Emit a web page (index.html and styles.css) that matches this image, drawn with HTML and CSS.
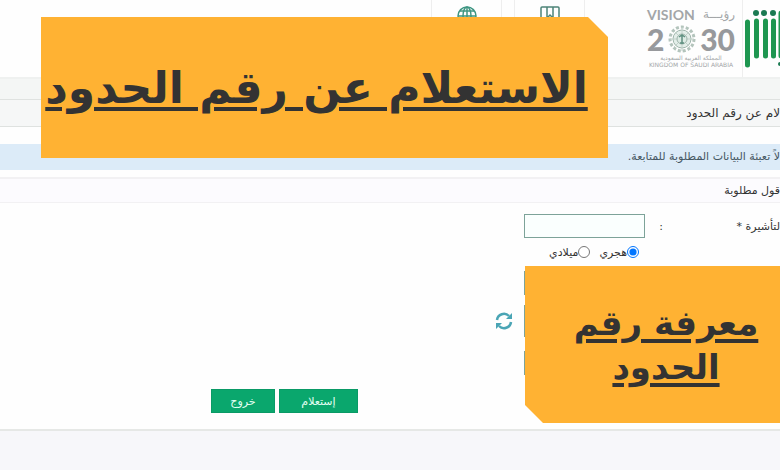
FILE: index.html
```html
<!DOCTYPE html>
<html lang="ar" dir="rtl">
<head>
    <meta charset="UTF-8">
    <meta name="viewport" content="width=device-width, initial-scale=1.0">
    <title>الاستعلام عن رقم الحدود</title>
    <link rel="stylesheet" href="styles.css">
</head>
<body>

    <header class="header">
        <svg class="absher" width="37" height="70" viewBox="0 0 37 70" aria-hidden="true">
            <g fill="none" stroke="#1e9650" stroke-width="5" stroke-linecap="round">
                <path d="M4.500 22V65M13.500 21V56M22.500 21V56M30.500 21V56M38 13V56"/>
            </g>
            <g fill="#1b7a52">
                <circle cx="13" cy="13" r="3"/>
                <circle cx="21" cy="13" r="3"/>
                <circle cx="30" cy="13" r="3"/>
                <circle cx="37" cy="64" r="2"/>
            </g>
        </svg>
        <div class="vision">
            <div class="vision-top"><span>رؤيـــة</span><span>VISION</span></div>
            <div class="vision-year" dir="ltr">
                <span>2</span>
                <svg width="30" height="30" viewBox="0 0 30 30" aria-hidden="true">
                    <circle cx="15" cy="15" r="12" fill="none" stroke="#b3c4bc" stroke-width="3" stroke-dasharray="3 2"/>
                    <circle cx="15" cy="15" r="9" fill="#e3eee9" stroke="#9fb5ab"/>
                    <path d="M15 3V27M3 15H27M7 7L23 23M23 7L7 23" stroke="#c3d2cb"/>
                    <circle cx="15" cy="15" r="5" fill="#dcebe4" stroke="#9fb5ab"/>
                    <path d="M15 11V20M12 13L15 11L18 13M13 19H17" fill="none" stroke="#5f9080" stroke-width="1.500"/>
                </svg>
                <span>30</span>
            </div>
            <div class="vision-small">المملكة العربية السعودية</div>
            <div class="vision-small">KINGDOM OF SAUDI ARABIA</div>
        </div>
        <nav class="tools">
            <a href="#" aria-label="الخدمات">
                <svg width="20" height="20" viewBox="0 0 20 20" fill="none" stroke="#4d8478" stroke-width="1.500">
                    <path d="M1 19V2Q1 1 2 1H18Q19 1 19 2V19ZM7 1V12L10 9L13 12V1"/>
                </svg>
            </a>
            <a href="#" aria-label="اللغة">
                <svg width="20" height="20" viewBox="0 0 20 20" fill="none" stroke="#3f9683" stroke-width="1.500">
                    <circle cx="10" cy="10" r="9"/>
                    <ellipse cx="10" cy="10" rx="4" ry="9"/>
                    <path d="M10 1V19M1 10H19M3 5H17M3 15H17"/>
                </svg>
            </a>
        </nav>
    </header>

    <div class="menu-bar"></div>
    <h1 class="page-title">لام عن رقم الحدود</h1>

    <main>
        <p class="notice">لاً تعبئة البيانات المطلوبة للمتابعة.</p>
        <h2 class="section-title">قول مطلوبة</h2>

        <form class="form">
            <div class="row">
                <label for="visa">لتأشيرة *</label>
                <span class="colon">:</span>
                <input type="text" id="visa">
            </div>
            <div class="radios">
                <input type="radio" name="calendar" id="hijri" checked>
                <label for="hijri">هجري</label>
                <input type="radio" name="calendar" id="gregorian">
                <label for="gregorian">ميلادي</label>
            </div>
            <div class="row">
                <span></span><span></span>
                <input type="text" aria-label="التاريخ">
            </div>
            <div class="row captcha">
                <span></span><span></span>
                <input type="text" aria-label="الرمز">
                <button type="button" class="refresh" aria-label="تحديث">
                    <svg width="18" height="18" viewBox="0 0 18 18" aria-hidden="true">
                        <g fill="none" stroke="#4aa5b5" stroke-width="2.500">
                            <path d="M2 8A7 7 0 0 1 14 4"/>
                            <path d="M16 10A7 7 0 0 1 4 14"/>
                        </g>
                        <path d="M17 1V7H11ZM1 17V11H7Z" fill="#4aa5b5"/>
                    </svg>
                </button>
            </div>
            <div class="row">
                <span></span><span></span>
                <input type="text" aria-label="رمز التحقق">
            </div>
            <div class="actions">
                <button type="button">إستعلام</button>
                <button type="button">خروج</button>
            </div>
        </form>
    </main>

    <div class="banner banner-top">الاستعلام عن رقم الحدود</div>
    <div class="banner banner-side">معرفة رقم الحدود</div>

</body>
</html>
```

FILE: styles.css
```css
* {
    box-sizing: border-box;
}
body {
    margin: 0;
    position: relative;
    min-height: 100vh;
    overflow-x: hidden;
    background-color: #f7f7fa;
    color: #333;
    font-family: "DejaVu Sans", sans-serif;
    font-size: 11px;
}
.header {
    display: flex;
    height: 77px;
    background-color: #fefefe;
}
.vision {
    width: 98px;
    padding: 7px 7px 0 2px;
    border-right: 1px solid #eee;
    color: #a3a6a8;
    text-align: center;
}
.vision-top {
    display: flex;
    justify-content: space-between;
    height: 17px;
    font-size: 12px;
    line-height: 15px;
}
.vision-top span:last-child {
    font-family: Lato, sans-serif;
    font-size: 14px;
    font-weight: bold;
}
.vision-year {
    display: flex;
    align-items: center;
    justify-content: space-between;
    height: 30px;
    color: #97999c;
    font-family: Lato, sans-serif;
    font-size: 30px;
    line-height: 30px;
    font-weight: 900;
}
.vision-small {
    font-size: 6px;
    line-height: 7px;
    white-space: nowrap;
}
.tools {
    display: flex;
    gap: 12px;
    margin-right: 60px;
}
.tools a {
    width: 71px;
    padding-top: 6px;
    border: solid #eee;
    border-width: 0 1px;
    text-align: center;
}
.menu-bar {
    height: 23px;
    background-color: #f4f6f5;
    border-top: 2px solid #eff1f0;
    border-bottom: 1px solid #dfe2e0;
}
.page-title {
    height: 27px;
    margin: 0;
    background-color: #f6f7f7;
    border-bottom: 1px solid #dfe2e0;
    font-size: 12px;
    line-height: 26px;
    font-weight: normal;
}
main {
    padding-top: 17px;
    background-color: #fefefe;
    border-bottom: 2px solid #e6e8e6;
}
.notice {
    margin: 0 0 7px;
    background-color: #dcebf8;
    color: #465763;
    line-height: 26px;
}
.section-title {
    margin: 0;
    background-color: #fcfbfe;
    border: solid #f2f1f3;
    border-width: 2px 0 1px;
    font-size: 11px;
    line-height: 23px;
    font-weight: normal;
}
.form {
    padding: 11px 0 16px;
}
.row {
    display: grid;
    grid-template-columns: 107px 28px 121px 40px;
    align-items: center;
}
.colon {
    padding-right: 10px;
}
.row input {
    width: 100%;
    height: 24px;
    background-color: #fafffe;
    border: 1px solid #7da399;
}
.radios {
    display: flex;
    align-items: center;
    height: 28px;
    margin-bottom: 5px;
    padding-right: 141px;
}
.radios input {
    width: 12px;
    height: 12px;
    margin: 0;
}
.radios label {
    margin-left: 9px;
}
.captcha {
    margin: 10px 0 14px;
}
.captcha input {
    height: 32px;
}
.refresh {
    padding: 0;
    background: none;
    border: 0;
    line-height: 0;
}
.actions {
    display: flex;
    gap: 4px;
    margin-top: 14px;
    padding-right: 422px;
}
.actions button {
    width: 64px;
    height: 24px;
    padding: 0;
    background-color: #0aa76d;
    border: 1px solid #0a9a66;
    color: #e3fff3;
    font: inherit;
}
.actions button:first-child {
    width: 79px;
}

/* yellow callouts over the page */
.banner {
    position: absolute;
    display: flex;
    align-items: center;
    justify-content: center;
    background-color: #ffb233;
    color: #333;
    font-weight: bold;
    text-align: center;
    text-decoration: underline;
    text-decoration-thickness: 4px;
    text-underline-offset: 4px;
}
.banner-top {
    top: 17px;
    right: 172px;
    left: 41px;
    height: 141px;
    padding-right: 16px;
    font-size: 44px;
    white-space: nowrap;
    clip-path: polygon(0 0, calc(100% - 20px) 0, 100% 20px, 100% 100%, 0 100%);
}
.banner-side {
    top: 266px;
    right: 0;
    width: 255px;
    height: 157px;
    padding: 0 20px 0 47px;
    font-size: 34px;
    line-height: 44px;
    clip-path: polygon(0 0, 100% 0, 100% 100%, 18px 100%, 0 calc(100% - 18px));
}
```
